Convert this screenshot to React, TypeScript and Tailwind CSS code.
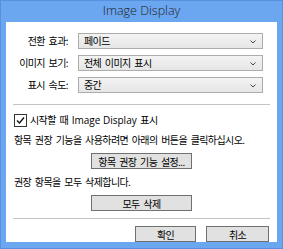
import React from 'react';

const font = '"Noto Sans CJK KR", "Liberation Sans", sans-serif';

const Chevron = () => (
  <svg width="6" height="4" viewBox="0 0 6 4" className="absolute right-[6px] top-[6px]">
    <path d="M0.5 0.5 L3 3 L5.5 0.5" fill="none" stroke="#444" strokeWidth="1" />
  </svg>
);

const Select: React.FC<{value: string}> = ({value}) => (
  <div className="relative w-[185px] h-[16px] border border-[#acacac] bg-gradient-to-b from-[#f3f3f3] to-[#e6e6e6] pl-[5px] text-[10px] leading-[14px] tracking-[-0.6px] [word-spacing:2px] text-black">
    {value}
    <Chevron />
  </div>
);

const Button: React.FC<{label: string; w: string}> = ({label, w}) => (
  <div
    className={`${w} h-[16px] border border-[#707070] bg-[#e1e1e1] flex items-center justify-center text-[10px] tracking-[-0.6px] [word-spacing:2px] text-black`}>
    {label}
  </div>
);

export default function App() {
  const rows = [
    ['전환 효과:', '페이드'],
    ['이미지 보기:', '전체 이미지 표시'],
    ['표시 속도:', '중간'],
  ];
  return (
    <div
      className="w-[283px] h-[249px] bg-[#6ba6f0] border border-[#5890e0] flex flex-col"
      style={{fontFamily: font}}>
      {/* Title bar */}
      <div
        className="h-[21px] flex items-center justify-center text-[12.5px] font-light text-[#222]"
        style={{fontFamily: '"Open Sans", "Liberation Sans", sans-serif'}}>
        Image Display
      </div>

      {/* Body */}
      <div className="flex-1 mx-[5px] mb-[6px] bg-white flex flex-col text-black">
        {/* Settings rows */}
        <div className="mt-[11px] flex flex-col gap-[6px]">
          {rows.map(([label, value]) => (
            <div key={label} className="flex items-center">
              <div className="w-[62px] text-right text-[10px] tracking-[-0.6px] [word-spacing:2px] leading-[16px]">{label}</div>
              <div className="ml-[10px]">
                <Select value={value} />
              </div>
            </div>
          ))}
        </div>

        <div className="mt-[11px] mx-[7px] h-[1px] bg-[#c4c4c4]" />

        {/* Checkbox */}
        <div className="mt-[8px] ml-[8px] flex items-center gap-[3px] text-[10px] tracking-[-0.6px] [word-spacing:2px] leading-[13px]">
          <div className="w-[13px] h-[13px] border border-[#333] bg-white flex items-center justify-center">
            <svg width="9" height="9" viewBox="0 0 9 9">
              <path d="M1 4.5 L3.5 7 L8 1.5" fill="none" stroke="#111" strokeWidth="1.4" />
            </svg>
          </div>
          <span>
            시작할 때{' '}
            <span className="tracking-normal [word-spacing:0px]" style={{fontFamily: '"Open Sans", sans-serif'}}>
              Image Display
            </span>{' '}
            표시
          </span>
        </div>

        <div className="mt-[6px] ml-[8px] text-[10px] tracking-[-0.6px] [word-spacing:2px] leading-[14px]">
          항목 권장 기능을 사용하려면 아래의 버튼을 클릭하십시오.
        </div>

        <div className="mt-[6px] ml-[85px]">
          <Button label="항목 권장 기능 설정..." w="w-[101px]" />
        </div>

        <div className="mt-[6px] ml-[8px] text-[10px] tracking-[-0.6px] [word-spacing:2px] leading-[14px]">
          권장 항목을 모두 삭제합니다.
        </div>

        <div className="mt-[6px] ml-[85px]">
          <Button label="모두 삭제" w="w-[101px]" />
        </div>

        <div className="mt-[7px] mx-[7px] h-[1px] bg-[#c4c4c4]" />

        <div className="mt-[7px] mr-[8px] flex justify-end gap-[10px]">
          <Button label="확인" w="w-[61px]" />
          <Button label="취소" w="w-[63px]" />
        </div>
      </div>
    </div>
  );
}
